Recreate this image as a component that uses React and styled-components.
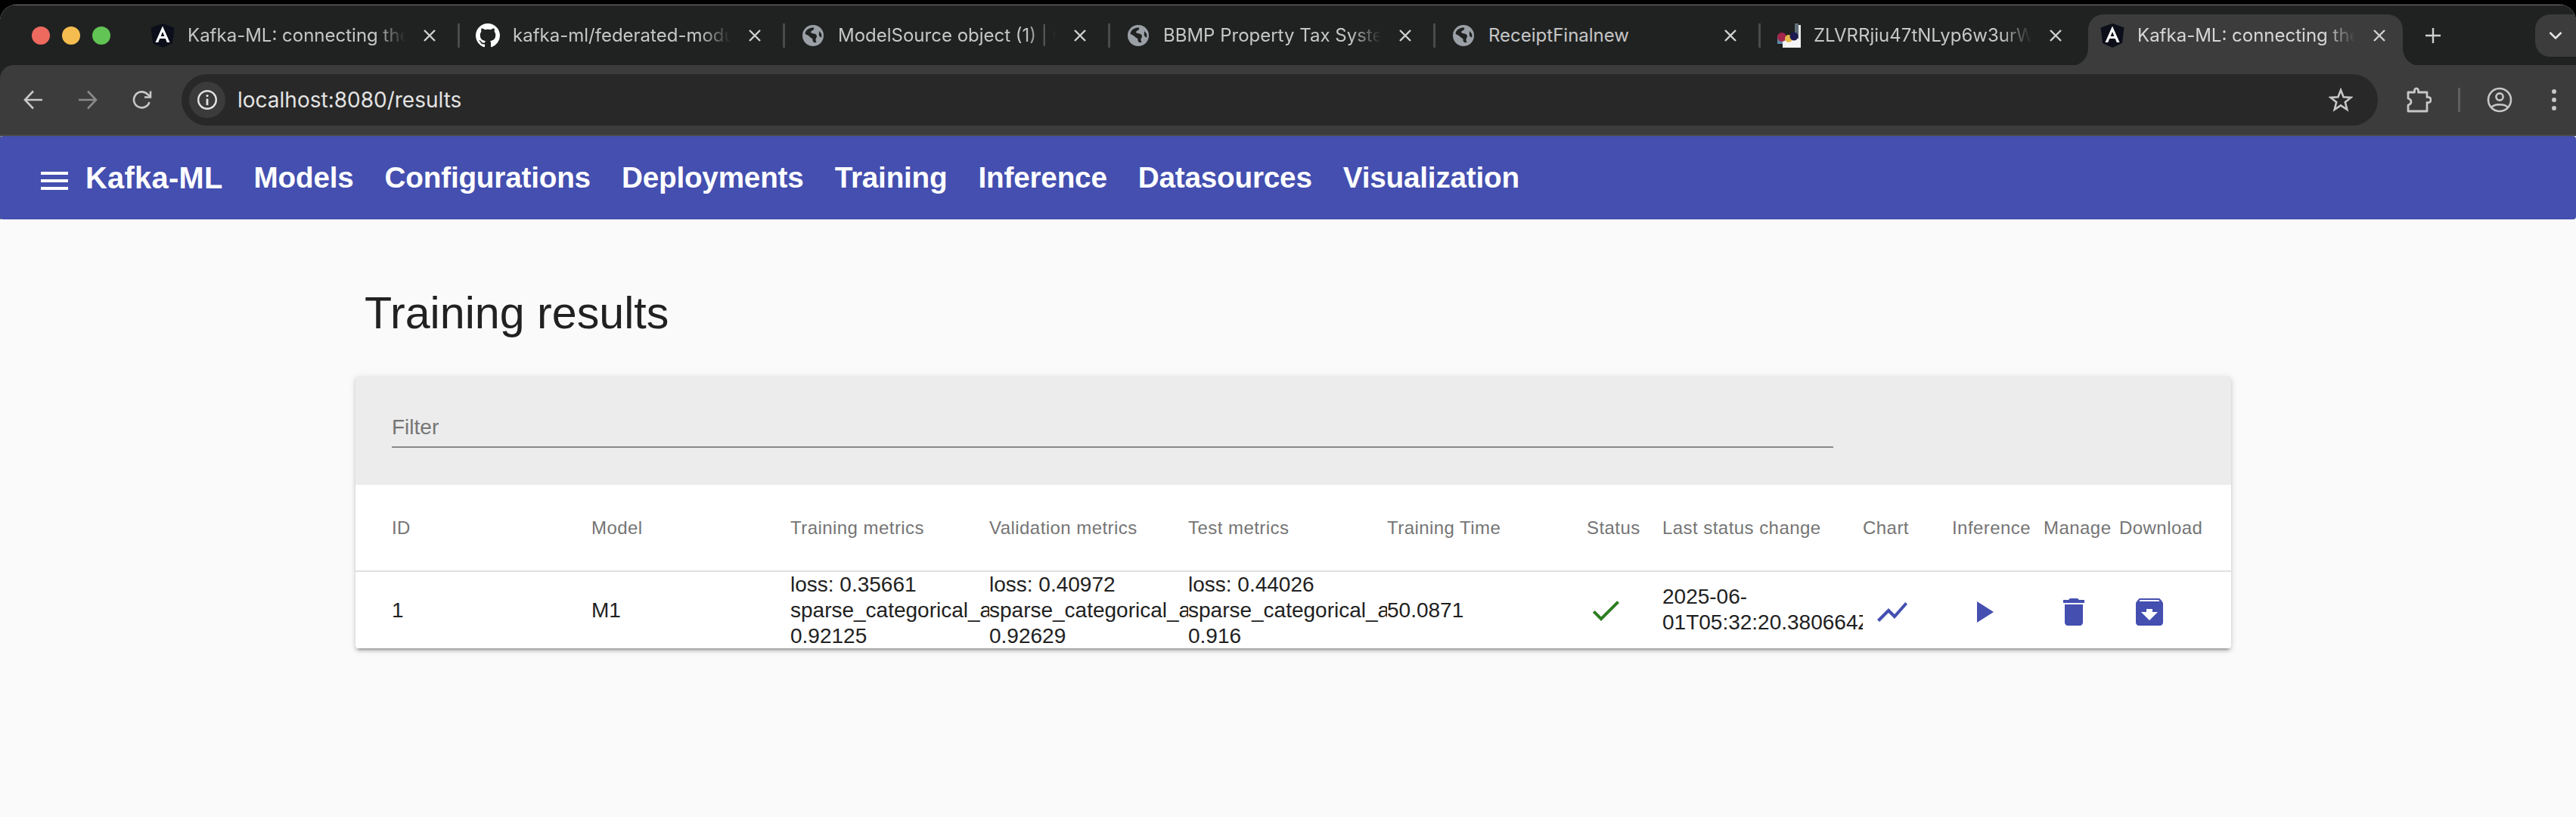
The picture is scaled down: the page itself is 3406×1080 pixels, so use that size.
import React from "react";
import styled, { createGlobalStyle } from "styled-components";

const Global = createGlobalStyle`
  html, body { margin: 0; padding: 0; background: #000; }
  body { width: 3406px; height: 1080px; overflow: hidden; font-family: "Liberation Sans", Arial, sans-serif; }
`;

const Screen = styled.div`
  width: 3406px;
  height: 1080px;
  padding-top: 6px;
  box-sizing: border-box;
  background: #000;
  display: flex;
  flex-direction: column;
`;
const Window = styled.div`
  flex: 1;
  display: flex;
  flex-direction: column;
  border-radius: 22px 22px 0 0;
  overflow: hidden;
  background: #fafafa;
  box-shadow: inset 0 1px 0 #7a7a7a, inset 1px 0 0 #555;
`;
const TabStrip = styled.div`
  height: 80px;
  box-sizing: border-box;
  display: flex;
  align-items: flex-start;
  padding-top: 12px;
  background: #202222;
  border-top: 1px solid #7a7a7a;
`;
const Lights = styled.div`
  width: 178px;
  height: 56px;
  box-sizing: border-box;
  padding-left: 42px;
  display: flex;
  gap: 16px;
  align-items: center;
  flex: none;
`;
const Light = styled.span`
  width: 24px;
  height: 24px;
  border-radius: 50%;
  background: ${(p) => p.$c};
`;
const Tab = styled.div`
  flex: none;
  position: relative;
  height: ${(p) => (p.$active ? "68px" : "56px")};
  width: ${(p) => (p.$active ? "416px" : "427px")};
  box-sizing: border-box;
  padding-left: ${(p) => (p.$active ? "16px" : "21px")};
  margin-left: ${(p) => (p.$active ? "6px" : "0")};
  padding-bottom: ${(p) => (p.$active ? "12px" : "0")};
  display: flex;
  align-items: center;
  background: ${(p) => (p.$active ? "#3c3c3c" : "transparent")};
  border-radius: ${(p) => (p.$active ? "20px 20px 0 0" : "0")};
  ${(p) =>
    p.$active
      ? `
  &::before, &::after {
    content: "";
    position: absolute;
    bottom: 0;
    width: 22px;
    height: 22px;
  }
  &::before { left: -22px; background: radial-gradient(circle at 0 0, transparent 21.5px, #3c3c3c 22px); }
  &::after { right: -22px; background: radial-gradient(circle at 100% 0, transparent 21.5px, #3c3c3c 22px); }
  `
      : ""}
`;
const Favicon = styled.svg`
  width: 32px;
  height: 32px;
  flex: none;
`;
const TabTitle = styled.div`
  margin-left: 17px;
  width: 288px;
  flex: none;
  overflow: hidden;
  white-space: nowrap;
  font-family: Inter, "Liberation Sans", sans-serif;
  font-size: 24px;
  line-height: 32px;
  color: ${(p) => (p.$active ? "#d6d6d6" : "#c6c6c6")};
  ${(p) =>
    p.$fade
      ? `-webkit-mask-image: linear-gradient(to right, #000 calc(100% - 40px), transparent 100%);
         mask-image: linear-gradient(to right, #000 calc(100% - 40px), transparent 100%);`
      : ""}
`;
const CloseIcon = styled.svg`
  width: 18px;
  height: 18px;
  margin-left: 23px;
  flex: none;
`;
const TabSep = styled.span`
  flex: none;
  width: 3px;
  height: 32px;
  margin-top: 12px;
  background: #494b4b;
`;
const NewTab = styled.svg`
  flex: none;
  width: 22px;
  height: 22px;
  margin: 17px 0 0 29px;
`;
const TabMenu = styled.div`
  flex: none;
  margin-left: auto;
  width: 54px;
  height: 56px;
  background: #3c3c3c;
  border-radius: 20px 0 0 20px;
  display: flex;
  align-items: center;
  justify-content: center;
`;
const Toolbar = styled.div`
  height: 94px;
  box-sizing: border-box;
  display: flex;
  align-items: center;
  background: #3c3c3c;
  border-radius: 18px 0 0 0;
  padding-left: 8px;
  border-bottom: 2px solid #4b4b4b;
  flex: none;
`;
const ToolbarWrap = styled.div`
  background: #202222;
  flex: none;
`;
const NavSlot = styled.div`
  width: 72px;
  display: flex;
  justify-content: center;
  flex: none;
`;
const Omnibox = styled.div`
  flex: 1;
  height: 68px;
  margin-left: 16px;
  border-radius: 34px;
  background: #282828;
  display: flex;
  align-items: center;
  padding: 0 33px 0 10px;
`;
const InfoChip = styled.div`
  width: 48px;
  height: 48px;
  border-radius: 50%;
  background: #3b3b3b;
  display: flex;
  align-items: center;
  justify-content: center;
  flex: none;
`;
const Url = styled.div`
  margin-left: 16px;
  flex: 1;
  font-family: Inter, "Liberation Sans", sans-serif;
  font-size: 28px;
  color: #e3e3e3;
`;
const RightTools = styled.div`
  width: 262px;
  flex: none;
  display: flex;
  align-items: center;
`;
const ToolIcon = styled.svg`
  flex: none;
  display: block;
  margin-left: ${(p) => p.$ml || 0}px;
`;
const ToolSep = styled.span`
  width: 3px;
  height: 32px;
  margin-left: 35px;
  background: #5f5f5f;
  flex: none;
`;
const AppBar = styled.header`
  height: 110px;
  flex: none;
  display: flex;
  align-items: center;
  gap: 41px;
  padding-left: 48px;
  background: #444fb0;
  border-radius: 4px;
  color: #fff;
`;
const MenuButton = styled.svg`
  width: 48px;
  height: 48px;
  fill: #fff;
  flex: none;
  margin: 8px -24px 0 0;
`;
const NavItem = styled.span`
  font-size: ${(p) => (p.$brand ? "39.8px" : "38.7px")};
  font-weight: 700;
  letter-spacing: ${(p) => (p.$brand ? "0.3px" : "-0.2px")};
  line-height: 48px;
`;
const Main = styled.main`
  flex: 1;
  padding: 89px 0 0 470px;
  background: #fafafa;
`;
const Title = styled.h1`
  margin: 0 0 48px 12px;
  font-size: 59.2px;
  font-weight: 400;
  line-height: 70px;
  color: #212121;
`;
const Card = styled.section`
  width: 2480px;
  background: #fff;
  box-shadow: 0 6px 2px -4px rgba(0, 0, 0, 0.2), 0 4px 4px 0 rgba(0, 0, 0, 0.14), 0 2px 10px 0 rgba(0, 0, 0, 0.12);
  border-radius: 4px;
  overflow: hidden;
`;
const FilterBar = styled.div`
  height: 144px;
  box-sizing: border-box;
  padding: 51px 0 0 48px;
  background: #ececec;
`;
const FilterField = styled.div`
  width: 1906px;
  height: 42px;
  box-sizing: content-box;
  border-bottom: 2px solid #8a8a8a;
  font-size: 28px;
  line-height: 34px;
  color: #757575;
`;
const COLS = "312px 263px 263px 263px 263px 264px 100px 265px 118px 121px 100px 148px";
const HeadRow = styled.div`
  display: grid;
  grid-template-columns: ${COLS};
  height: 115px;
  box-sizing: border-box;
  align-items: center;
  border-bottom: 2px solid #e0e0e0;
`;
const HeadCell = styled.div`
  padding-left: ${(p) => (p.$first ? "48px" : "0")};
  font-size: 24px;
  letter-spacing: 0.45px;
  line-height: 30px;
  white-space: nowrap;
  color: #757575;
  margin-top: 1px;
`;
const BodyRow = styled.div`
  display: grid;
  grid-template-columns: ${COLS};
  height: 101px;
  align-items: center;
`;
const Cell = styled.div`
  padding-left: ${(p) => (p.$first ? "48px" : "0")};
  font-size: 28px;
  line-height: 34px;
  color: #212121;
  overflow: hidden;
  height: 101px;
  display: flex;
  flex-direction: column;
  justify-content: center;
`;
const Metric = styled.span`
  white-space: nowrap;
  display: block;
`;
const DateText = styled.span`
  display: block;
  word-break: normal;
  overflow: hidden;
  margin-top: -2px;
`;
const ActionIcon = styled.svg`
  width: 48px;
  height: 48px;
  display: block;
  fill: ${(p) => p.$c || "#444fb0"};
  margin-left: ${(p) => p.$ml}px;
  margin-top: ${(p) => p.$mt || 0}px;
  flex: none;
`;

const Angular = () => (
  <Favicon viewBox="0 0 32 32">
    <path d="M16 0 L31.5 5.5 L29 26 L16 32 L3 26 L.5 5.5Z" fill="#0c0f1a" />
    <path d="M16 3.5 L6.5 25 H10.2 L12.2 20 H19.8 L21.8 25 H25.5Z M13.6 17 L16 11 L18.4 17Z" fill="#fff" fillRule="evenodd" />
  </Favicon>
);
const GitHub = () => (
  <Favicon viewBox="0 0 16 16">
    <path
      fill="#fff"
      d="M8 0C3.58 0 0 3.58 0 8c0 3.54 2.29 6.53 5.47 7.59.4.07.55-.17.55-.38 0-.19-.01-.82-.01-1.49-2.01.37-2.53-.49-2.69-.94-.09-.23-.48-.94-.82-1.13-.28-.15-.68-.52-.01-.53.63-.01 1.08.58 1.23.82.72 1.21 1.87.87 2.33.66.07-.52.28-.87.51-1.07-1.78-.2-3.64-.89-3.64-3.95 0-.87.31-1.59.82-2.15-.08-.2-.36-1.02.08-2.12 0 0 .67-.21 2.2.82.64-.18 1.32-.27 2-.27.68 0 1.36.09 2 .27 1.53-1.04 2.2-.82 2.2-.82.44 1.1.16 1.92.08 2.12.51.56.82 1.27.82 2.15 0 3.07-1.87 3.75-3.65 3.95.29.25.54.73.54 1.48 0 1.07-.01 1.93-.01 2.2 0 .21.15.46.55.38A8.013 8.013 0 0016 8c0-4.42-3.58-8-8-8z"
    />
  </Favicon>
);
const Globe = () => (
  <Favicon viewBox="0 0 32 32">
    <circle cx="16" cy="16" r="14" fill="#9aa0a6" />
    <path d="M8 8.5c3 -2.5 6 -3 9 -3 1 2-1 3.5-3 4.5-1.5 1-1 2.5 1 3 3 .5 6 1 6 4 0 2-2 3-1.5 5 .2 1 .5 2 1 3-3 1-5.5-1-5-3.5.3-2-3-2.5-4-4-1.5-2-5-2.5-6-4 .3-2 1.2-4 2.5-5z" fill="#202222" />
    <path d="M24 10l3 3.5c.5 2 .4 3.5.2 5-2.2-.5-3.7-2-3.4-4.5z" fill="#202222" />
  </Favicon>
);
const Pixel = () => (
  <Favicon viewBox="0 0 32 32">
    <rect x="24" y="0" width="5" height="20" fill="#5f6d78" />
    <rect x="8" y="20" width="24" height="12" fill="#f4f4f4" />
    <rect x="29" y="2" width="3" height="20" fill="#e8e8e8" />
    <rect x="1" y="16" width="7" height="11" fill="#5c88a8" />
    <circle cx="7" cy="18" r="6" fill="#a3264b" />
    <circle cx="16" cy="20" r="5" fill="#e6b94a" />
    <circle cx="23" cy="17" r="5.5" fill="#1c1a50" />
  </Favicon>
);
const Close = () => (
  <CloseIcon viewBox="0 0 18 18" fill="none" stroke="#d0d0d0" strokeWidth="2.4">
    <path d="M2 2 L16 16 M16 2 L2 16" />
  </CloseIcon>
);

const tabs = [
  { icon: <Angular />, title: "Kafka-ML: connecting the", fade: true },
  { icon: <GitHub />, title: "kafka-ml/federated-modu", fade: true },
  { icon: <Globe />, title: "ModelSource object (1) | C", fade: true },
  { icon: <Globe />, title: "BBMP Property Tax Syste", fade: true },
  { icon: <Globe />, title: "ReceiptFinalnew" },
  { icon: <Pixel />, title: "ZLVRRjiu47tNLyp6w3urW", fade: true },
];

const navItems = ["Kafka-ML", "Models", "Configurations", "Deployments", "Training", "Inference", "Datasources", "Visualization"];
const heads = ["ID", "Model", "Training metrics", "Validation metrics", "Test metrics", "Training Time", "Status", "Last status change", "Chart", "Inference", "Manage", "Download"];

const metrics = (loss, acc) => (
  <Cell>
    <Metric>loss: {loss}</Metric>
    <Metric>sparse_categorical_accuracy:</Metric>
    <Metric>{acc}</Metric>
  </Cell>
);

export default function App() {
  return (
    <Screen>
      <Global />
      <Window>
        <TabStrip>
          <Lights>
            <Light $c="#ee6a5f" />
            <Light $c="#f5bd4f" />
            <Light $c="#61c454" />
          </Lights>
          {tabs.map((t, i) => (
            <React.Fragment key={i}>
              <Tab>
                {t.icon}
                <TabTitle $fade={t.fade}>{t.title}</TabTitle>
                <Close />
              </Tab>
              {i < tabs.length - 1 && <TabSep />}
            </React.Fragment>
          ))}
          <Tab $active>
            <Angular />
            <TabTitle $active $fade>Kafka-ML: connecting the</TabTitle>
            <Close />
          </Tab>
          <NewTab viewBox="0 0 22 22" stroke="#d0d0d0" strokeWidth="2.4" fill="none">
            <path d="M11 1 V21 M1 11 H21" />
          </NewTab>
          <TabMenu>
            <svg width="18" height="12" viewBox="0 0 18 12" fill="none" stroke="#e3e3e3" strokeWidth="2.6">
              <path d="M1.5 2 L9 9.5 L16.5 2" />
            </svg>
          </TabMenu>
        </TabStrip>
        <ToolbarWrap>
          <Toolbar>
            <NavSlot>
              <svg width="26" height="26" viewBox="0 0 26 26" fill="none" stroke="#c7c7c7" strokeWidth="2.6">
                <path d="M25 13 H2 M13 1.5 L2 13 L13 24.5" />
              </svg>
            </NavSlot>
            <NavSlot>
              <svg width="26" height="26" viewBox="0 0 26 26" fill="none" stroke="#8a8a8a" strokeWidth="2.6">
                <path d="M1 13 H24 M13 1.5 L24 13 L13 24.5" />
              </svg>
            </NavSlot>
            <NavSlot>
              <svg width="26" height="26" viewBox="0 0 26 26" fill="none" stroke="#c7c7c7" strokeWidth="2.6">
                <path d="M22.5 16 A10.5 10.5 0 1 1 20 5.5 L24 9" />
                <path d="M24 1.5 V9.5 H16" />
              </svg>
            </NavSlot>
            <Omnibox>
              <InfoChip>
                <svg width="28" height="28" viewBox="0 0 28 28" fill="none" stroke="#e3e3e3" strokeWidth="2.4">
                  <circle cx="14" cy="14" r="11.8" />
                  <path d="M14 12.5 V21" strokeWidth="2.8" />
                  <circle cx="14" cy="8.6" r="1.6" fill="#e3e3e3" stroke="none" />
                </svg>
              </InfoChip>
              <Url>localhost:8080/results</Url>
              <ToolIcon width="32" height="32" viewBox="0 0 32 32" fill="none" stroke="#c7c7c7" strokeWidth="2.6">
                <path d="M16 3 L19.6 12.2 L29.5 12.9 L21.8 19.1 L24.3 28.8 L16 23.4 L7.7 28.8 L10.2 19.1 L2.5 12.9 L12.4 12.2Z" />
              </ToolIcon>
            </Omnibox>
            <RightTools>
              <ToolIcon $ml={37} width="34" height="34" viewBox="0 0 34 34" fill="none" stroke="#c7c7c7" strokeWidth="2.8" strokeLinejoin="round">
                <path d="M3 7 H11.5 C11 3 12.5 1.8 14 1.8 C15.5 1.8 17 3 16.5 7 H28 V13.5 C32 13 33 15 33 17 C33 19 32 21 28 20.5 V32 H3 V24 C6 23 7 21 7 19.5 C7 17.5 6 16 3 15Z" />
              </ToolIcon>
              <ToolSep />
              <ToolIcon $ml={35} width="34" height="34" viewBox="0 0 34 34" fill="none" stroke="#c7c7c7" strokeWidth="2.6">
                <circle cx="17" cy="17" r="15" />
                <circle cx="17" cy="13" r="4.6" />
                <path d="M6 27 C10 22 24 22 28 27" />
              </ToolIcon>
              <ToolIcon $ml={49} width="12" height="32" viewBox="0 0 12 32" fill="#c7c7c7">
                <circle cx="6" cy="5" r="3" />
                <circle cx="6" cy="16" r="3" />
                <circle cx="6" cy="27" r="3" />
              </ToolIcon>
            </RightTools>
          </Toolbar>
        </ToolbarWrap>
        <AppBar>
          <MenuButton viewBox="0 0 24 24">
            <path d="M3 18h18v-2H3v2zm0-5h18v-2H3v2zm0-7v2h18V6H3z" />
          </MenuButton>
          {navItems.map((n, i) => (
            <NavItem key={n} $brand={i === 0}>{n}</NavItem>
          ))}
        </AppBar>
        <Main>
          <Title>Training results</Title>
          <Card>
            <FilterBar>
              <FilterField>Filter</FilterField>
            </FilterBar>
            <HeadRow>
              {heads.map((h, i) => (
                <HeadCell key={h} $first={i === 0}>{h}</HeadCell>
              ))}
            </HeadRow>
            <BodyRow>
              <Cell $first>1</Cell>
              <Cell>M1</Cell>
              {metrics("0.35661", "0.92125")}
              {metrics("0.40972", "0.92629")}
              {metrics("0.44026", "0.916")}
              <Cell>50.0871</Cell>
              <Cell>
                <ActionIcon $c="#2e7d22" $ml={1} viewBox="0 0 24 24">
                  <path d="M9 16.17L4.83 12l-1.42 1.41L9 19 21 7l-1.41-1.41z" />
                </ActionIcon>
              </Cell>
              <Cell>
                <DateText>2025-06-01T05:32:20.380664Z</DateText>
              </Cell>
              <Cell>
                <ActionIcon $ml={15} $mt={4} viewBox="0 0 24 24">
                  <path d="M3.5 18.49l6-6.01 4 4L22 6.92l-1.41-1.41-7.09 7.97-4-4L2 16.99z" />
                </ActionIcon>
              </Cell>
              <Cell>
                <ActionIcon $ml={17} $mt={4} viewBox="0 0 24 24">
                  <path d="M8 5v14l11-7z" />
                </ActionIcon>
              </Cell>
              <Cell>
                <ActionIcon $ml={16} $mt={4} viewBox="0 0 24 24">
                  <path d="M6 19c0 1.1.9 2 2 2h8c1.1 0 2-.9 2-2V7H6v12zM19 4h-3.5l-1-1h-5l-1 1H5v2h14V4z" />
                </ActionIcon>
              </Cell>
              <Cell>
                <ActionIcon $ml={16} $mt={4} viewBox="0 0 24 24">
                  <path d="M20.54 5.23l-1.39-1.68C18.88 3.21 18.47 3 18 3H6c-.47 0-.88.21-1.16.55L3.46 5.23C3.17 5.57 3 6.02 3 6.5V19c0 1.1.9 2 2 2h14c1.1 0 2-.9 2-2V6.5c0-.48-.17-.93-.46-1.27zM12 17.5L6.5 12H10v-2h4v2h3.5L12 17.5zM5.12 5l.81-1h12l.94 1H5.12z" />
                </ActionIcon>
              </Cell>
            </BodyRow>
          </Card>
        </Main>
      </Window>
    </Screen>
  );
}
